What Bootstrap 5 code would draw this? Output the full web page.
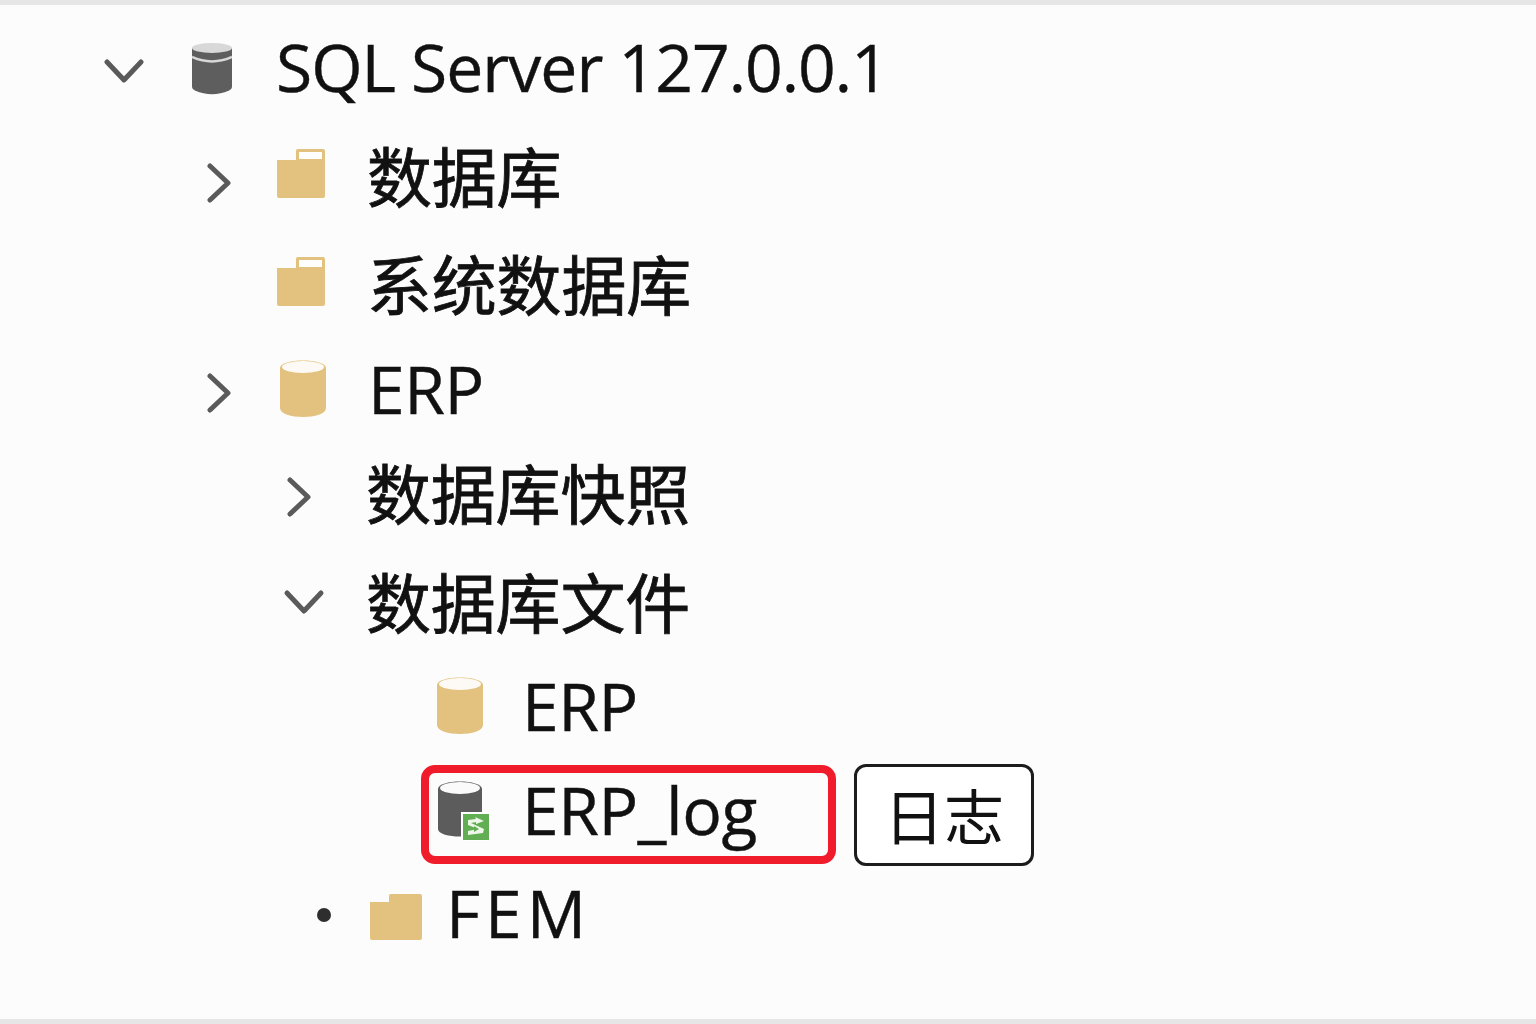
<!DOCTYPE html>
<html lang="zh-CN">
<head>
<meta charset="utf-8">
<title>SQL Server</title>
<link href="https://cdn.jsdelivr.net/npm/bootstrap@5.3.0/dist/css/bootstrap.min.css" rel="stylesheet">
<style>
html,body{height:1024px;overflow:hidden}
body{background:#fcfcfc;color:#111;font-family:"Open Sans","Noto Sans CJK SC",sans-serif}
.frame{height:1024px;border-top:5px solid #e6e6e6;border-bottom:5px solid #e6e6e6;background:#fcfcfc}
.tree-row{line-height:1;white-space:nowrap}
.tree-row svg{display:block;flex:none}
.label{font-size:66px;letter-spacing:-.5px;-webkit-text-stroke:.4px #111}
.cjk{font-size:65px;letter-spacing:-.2px;font-weight:400;-webkit-text-stroke:.8px #111;font-family:"Noto Sans CJK SC",sans-serif}
.sql{letter-spacing:-1px;margin-left:44px;margin-bottom:2px}
.r1{height:115px;padding-top:8px;padding-left:104px}
.r2{height:108px;padding-left:207px}
.r3{height:108px;padding-left:277px}
.r4{height:104px;padding-left:207px}
.r5{height:107px;padding-left:287px}
.r6{height:106px;padding-left:283px}
.r7{height:104px;padding-left:436px}
.r8{height:103px;margin-top:6px;padding-left:421px}
.r9{height:100px;padding-left:316px}
.chev-down1{margin-top:8px}
.dbdark{margin-left:48px;margin-top:4px}
.chev2{margin-top:18px}
.chev4{margin-top:10px}
.chev5{margin-top:6px}
.chev6{margin-top:2px}
.after-chev{margin-left:46px}
.after-chev2{margin-left:48px}
.txt-a{margin-left:42px}
.txt-e{margin-left:41px}
.txt-d{margin-left:38px}
.txt5{margin-left:55px;margin-bottom:4px}
.txt6{margin-left:41px}
.sel{width:415px;height:99px;border:8px solid #f01c2c;border-radius:14px;padding-left:8px}
.ic-log{margin-bottom:10px}
.txt-log{margin-left:31px;margin-bottom:12px}
.tag{width:180px;height:102px;margin-left:18px;border:3.5px solid #1c1c1c;border-radius:12px;background:#fff;font-size:60px;font-family:"Noto Sans CJK SC",sans-serif;padding-bottom:2px}
.dot{margin-bottom:2px}
.fold9{margin-left:38px;margin-top:2px}
.txt-fem{margin-left:24px;margin-bottom:8px;letter-spacing:5px}
</style>
</head>
<body>
<main class="frame">
  <div class="tree-row r1 d-flex align-items-center">
    <svg class="chev-down1" width="40" height="26" viewBox="0 0 40 26" fill="none" stroke="#5a5a5a" stroke-width="5" stroke-linecap="round" stroke-linejoin="round"><path d="M3 4L20 22L37 4"/></svg>
    <svg class="dbdark" width="40" height="52" viewBox="0 0 40 52"><path d="M0 5V44Q0 46 3 47.5Q20 55 37 47.5Q40 46 40 44V5Z" fill="#5e5e5e"/><ellipse cx="20" cy="5" rx="20" ry="5" fill="#d8d8d8"/><path d="M0 14Q20 23 40 14" fill="none" stroke="#d8d8d8" stroke-width="2.5"/></svg>
    <span class="label sql">SQL Server 127.0.0.1</span>
  </div>
  <div class="tree-row r2 d-flex align-items-center">
    <svg class="chev2" width="24" height="40" viewBox="0 0 24 40" fill="none" stroke="#5a5a5a" stroke-width="5" stroke-linecap="round" stroke-linejoin="round"><path d="M3 3L21 20L3 37"/></svg>
    <svg class="after-chev" width="48" height="50" viewBox="0 0 48 50"><path d="M0 11H19V1.5Q19 0 21 0H46Q48 0 48 2V47Q48 49 46 49H2Q0 49 0 47Z" fill="#e2c27e"/><rect x="22" y="3" width="23" height="7" fill="#fff"/></svg>
    <span class="label cjk txt-a">数据库</span>
  </div>
  <div class="tree-row r3 d-flex align-items-center">
    <svg width="48" height="50" viewBox="0 0 48 50"><path d="M0 11H19V1.5Q19 0 21 0H46Q48 0 48 2V47Q48 49 46 49H2Q0 49 0 47Z" fill="#e2c27e"/><rect x="22" y="3" width="23" height="7" fill="#fff"/></svg>
    <span class="label cjk txt-a">系统数据库</span>
  </div>
  <div class="tree-row r4 d-flex align-items-center">
    <svg class="chev4" width="24" height="40" viewBox="0 0 24 40" fill="none" stroke="#5a5a5a" stroke-width="5" stroke-linecap="round" stroke-linejoin="round"><path d="M3 3L21 20L3 37"/></svg>
    <svg class="after-chev2" width="48" height="60" viewBox="0 0 48 60"><path d="M1 10C1 0 47 0 47 10V50C47 62 1 62 1 50Z" fill="#e2c27e"/><ellipse cx="24" cy="9" rx="21" ry="6" fill="#fdfaf5"/></svg>
    <span class="label txt-e">ERP</span>
  </div>
  <div class="tree-row r5 d-flex align-items-center">
    <svg class="chev5" width="24" height="40" viewBox="0 0 24 40" fill="none" stroke="#5a5a5a" stroke-width="5" stroke-linecap="round" stroke-linejoin="round"><path d="M3 3L21 20L3 37"/></svg>
    <span class="label cjk txt5">数据库快照</span>
  </div>
  <div class="tree-row r6 d-flex align-items-center">
    <svg class="chev6" width="42" height="28" viewBox="0 0 42 28" fill="none" stroke="#5a5a5a" stroke-width="5" stroke-linecap="round" stroke-linejoin="round"><path d="M4 6L21 24L38 6"/></svg>
    <span class="label cjk txt6">数据库文件</span>
  </div>
  <div class="tree-row r7 d-flex align-items-center">
    <svg width="48" height="60" viewBox="0 0 48 60"><path d="M1 10C1 0 47 0 47 10V50C47 62 1 62 1 50Z" fill="#e2c27e"/><ellipse cx="24" cy="9" rx="21" ry="6" fill="#fdfaf5"/></svg>
    <span class="label txt-d">ERP</span>
  </div>
  <div class="tree-row r8 d-flex align-items-center">
    <div class="sel d-flex align-items-center">
      <svg class="ic-log" width="54" height="62" viewBox="0 0 54 62"><path d="M1 10C1 0 45 0 45 10V50C45 60 1 60 1 50Z" fill="#5c5c5c"/><ellipse cx="23" cy="9" rx="20" ry="6" fill="#fafafa"/><rect x="24" y="33" width="30" height="29" fill="#fff"/><rect x="26" y="35" width="26" height="26" fill="#62ae52"/><path d="M31 41L39 40L38 38L47 42L39 45V43L34 44L47 50L46 54L31 56V52L41 50L31 46Z" fill="#eef7ea"/><path d="M37 47L42 50L37 53Z" fill="#62ae52"/></svg>
      <span class="label txt-log">ERP_log</span>
    </div>
    <div class="tag d-flex align-items-center justify-content-center">日志</div>
  </div>
  <div class="tree-row r9 d-flex align-items-center">
    <svg class="dot" width="16" height="16" viewBox="0 0 16 16"><circle cx="8" cy="8" r="7" fill="#2e2e2e"/></svg>
    <svg class="fold9" width="52" height="46" viewBox="0 0 52 46"><path d="M0 8H19V1.5Q19 0 21 0H50Q52 0 52 2V44Q52 46 50 46H2Q0 46 0 44Z" fill="#e2c27e"/></svg>
    <span class="label txt-fem">FEM</span>
  </div>
</main>
</body>
</html>
